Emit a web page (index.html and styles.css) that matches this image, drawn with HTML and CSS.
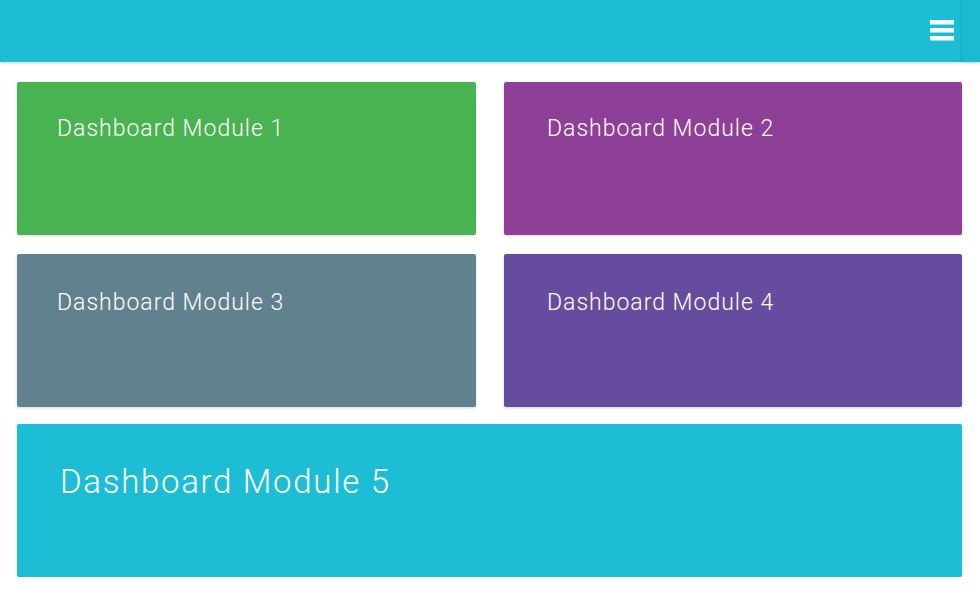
FILE: index.html
```html
<!DOCTYPE html>
<html>
<head>
<meta charset="utf-8">
<link rel="stylesheet" href="styles.css">
</head>
<body>
<header class="topbar">
  <div class="topbar-main">
    <button class="menu-btn" aria-label="Menu">
      <span class="bar"></span><span class="bar"></span><span class="bar"></span>
    </button>
  </div>
  <div class="topbar-edge"></div>
</header>
<main class="grid">
  <section class="card green"><h2 class="card-title">Dashboard Module 1</h2></section>
  <section class="card magenta"><h2 class="card-title alt">Dashboard Module 2</h2></section>
  <section class="card slate"><h2 class="card-title lower">Dashboard Module 3</h2></section>
  <section class="card violet"><h2 class="card-title alt lower">Dashboard Module 4</h2></section>
  <section class="card cyan wide"><h2 class="card-title big">Dashboard Module 5</h2></section>
</main>
</body>
</html>
```
FILE: styles.css
```css
html, body {
  margin: 0;
  padding: 0;
  background: #ffffff;
  font-family: "Roboto", "Liberation Sans", sans-serif;
}
.topbar {
  display: flex;
  height: 62px;
  background: #1dbed5;
  box-shadow: 0 1px 3px rgba(0,0,0,0.18);
  position: relative;
  z-index: 1;
}
.topbar-main {
  flex: 1;
  display: flex;
  justify-content: flex-end;
  align-items: flex-start;
}
.topbar-edge {
  width: 18px;
  background: #1cbad1;
  box-shadow: -1px 0 2px rgba(0,0,0,0.12);
}
.menu-btn {
  margin: 20px 8px 0 0;
  padding: 0;
  border: 0;
  background: none;
  display: flex;
  flex-direction: column;
  gap: 4px;
  cursor: pointer;
}
.bar {
  display: block;
  width: 24px;
  height: 4px;
  background: #ffffff;
  box-shadow: 0 1px 0 rgba(255,255,255,0.5);
}
.grid {
  display: grid;
  grid-template-columns: 459px 458px;
  column-gap: 28px;
  row-gap: 19px;
  padding: 20px 18px 0 17px;
}
.card {
  height: 153px;
  border-radius: 2px;
  box-shadow: 0 1px 3px rgba(0,0,0,0.16);
  color: #ffffff;
}
.wide {
  grid-column: 1 / 3;
  margin-top: -2px;
}
.green { background: #49b251; }
.magenta { background: #8e3f98; }
.slate { background: #60818d; }
.violet { background: #664c9e; }
.cyan { background: #1dbed5; }
.card-title {
  margin: 0;
  padding: 33px 0 0 40px;
  font-weight: 300;
  font-size: 23px;
  line-height: 28px;
  letter-spacing: 1px;
}
.card-title.alt {
  padding-left: 43px;
}
.card-title.lower {
  padding-top: 35px;
}
.card-title.big {
  font-size: 33px;
  line-height: 40px;
  letter-spacing: 1.7px;
  padding: 38px 0 0 43px;
}
```
